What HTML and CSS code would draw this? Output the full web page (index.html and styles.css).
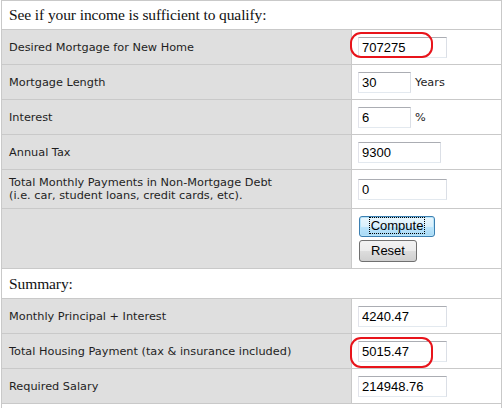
FILE: index.html
```html
<!DOCTYPE html>
<html>
<head>
<meta charset="utf-8">
<link rel="stylesheet" href="styles.css">
</head>
<body>
<table class="calc">
  <colgroup><col class="c-label"><col class="c-field"></colgroup>
  <tr class="head"><td colspan="2">See if your income is sufficient to qualify:</td></tr>
  <tr class="row">
    <td class="label">Desired Mortgage for New Home</td>
    <td class="field"><span class="mark-wrap"><input class="inp w89" value="707275"><span class="mark mark-1"></span></span></td>
  </tr>
  <tr class="row">
    <td class="label">Mortgage Length</td>
    <td class="field"><input class="inp w52" value="30"><span class="unit">Years</span></td>
  </tr>
  <tr class="row">
    <td class="label">Interest</td>
    <td class="field"><input class="inp w52" value="6"><span class="unit">%</span></td>
  </tr>
  <tr class="row">
    <td class="label">Annual Tax</td>
    <td class="field"><input class="inp w83" value="9300"></td>
  </tr>
  <tr class="row tall">
    <td class="label">Total Monthly Payments in Non-Mortgage Debt<br>(i.e. car, student loans, credit cards, etc).</td>
    <td class="field"><input class="inp w89" value="0"></td>
  </tr>
  <tr class="row btns">
    <td class="label"></td>
    <td class="field">
      <div class="btn-stack">
        <button class="btn btn-focus"><span class="focus-ring">Compute</span></button>
        <button class="btn">Reset</button>
      </div>
    </td>
  </tr>
  <tr class="head head-2"><td colspan="2">Summary:</td></tr>
  <tr class="row">
    <td class="label">Monthly Principal + Interest</td>
    <td class="field"><input class="inp w89" value="4240.47"></td>
  </tr>
  <tr class="row">
    <td class="label">Total Housing Payment (tax &amp; insurance included)</td>
    <td class="field"><span class="mark-wrap"><input class="inp w89" value="5015.47"><span class="mark mark-2"></span></span></td>
  </tr>
  <tr class="row">
    <td class="label">Required Salary</td>
    <td class="field"><input class="inp w89" value="214948.76"></td>
  </tr>
  <tr class="head"><td colspan="2">&nbsp;</td></tr>
</table>
</body>
</html>
```
FILE: styles.css
```css
html, body {
  margin: 0;
  padding: 0;
  background: #fff;
}
body {
  padding-left: 1px;
}
.calc {
  border-collapse: collapse;
  width: 501px;
  table-layout: fixed;
}
.c-label { width: 350px; }
.calc td {
  border: 1px solid #c9c9c9;
  padding: 0 0 0 7px;
  vertical-align: middle;
}
.head td {
  height: 28px;
  background: #fff;
  font-family: "Liberation Serif", serif;
  font-size: 15.5px;
  letter-spacing: -0.1px;
  color: #111;
  padding-left: 7px;
}
.head-2 td { height: 29px; }
.row td { height: 34px; }
.row.tall td { height: 38px; }
.row.btns td { height: 59px; }
.label {
  background: #dfdfdf;
  font-family: "DejaVu Sans", Verdana, sans-serif;
  font-size: 11.3px;
  line-height: 13px;
  color: #1e1e1e;
}
.calc td.field {
  background: #fff;
  padding-left: 6px;
  white-space: nowrap;
}
.inp {
  box-sizing: border-box;
  height: 21px;
  margin: 0;
  padding: 0 3px;
  border: 1px solid;
  border-color: #abadb3 #dbdfe6 #e3e9ef #e2e3ea;
  font-family: "Liberation Sans", Arial, sans-serif;
  font-size: 13px;
  color: #000;
  background: #fff;
  vertical-align: middle;
}
.w89 { width: 89px; }
.w83 { width: 83px; }
.w52 { width: 53px; }
.unit {
  font-family: "DejaVu Sans", Verdana, sans-serif;
  font-size: 11.3px;
  color: #1e1e1e;
  margin-left: 4px;
  vertical-align: middle;
}
.mark-wrap {
  position: relative;
  display: inline-block;
  vertical-align: middle;
}
.mark-wrap .inp { display: block; }
.mark {
  position: absolute;
  left: -8px;
  width: 79px;
  border: 2px solid #e8141b;
  border-radius: 11px;
  pointer-events: none;
}
.mark-1 { top: -5px; height: 22px; }
.mark-2 { top: -4px; height: 27px; }
.btn-stack {
  display: flex;
  flex-direction: column;
  align-items: flex-start;
  gap: 3px;
  padding-left: 1px;
}
.btn {
  box-sizing: border-box;
  height: 22px;
  margin: 0;
  padding: 0 11px;
  border: 1px solid #707070;
  border-radius: 3px;
  background: linear-gradient(#f2f2f2 0%, #ebebeb 50%, #dddddd 51%, #cfcfcf 100%);
  font-family: "Liberation Sans", Arial, sans-serif;
  font-size: 13px;
  color: #000;
  line-height: 18px;
}
.btn-focus {
  width: 76px;
  height: 21px;
  padding: 0;
  border-color: #3c7fb1;
  box-shadow: inset 0 0 0 1px #b7e4f9;
  background: linear-gradient(#eaf6fd 0%, #d9f0fc 50%, #bee6fd 51%, #a7d9f5 100%);
}
.focus-ring {
  display: inline-block;
  border: 1px dotted #000;
  padding: 0 1px;
  line-height: 15px;
}
```
